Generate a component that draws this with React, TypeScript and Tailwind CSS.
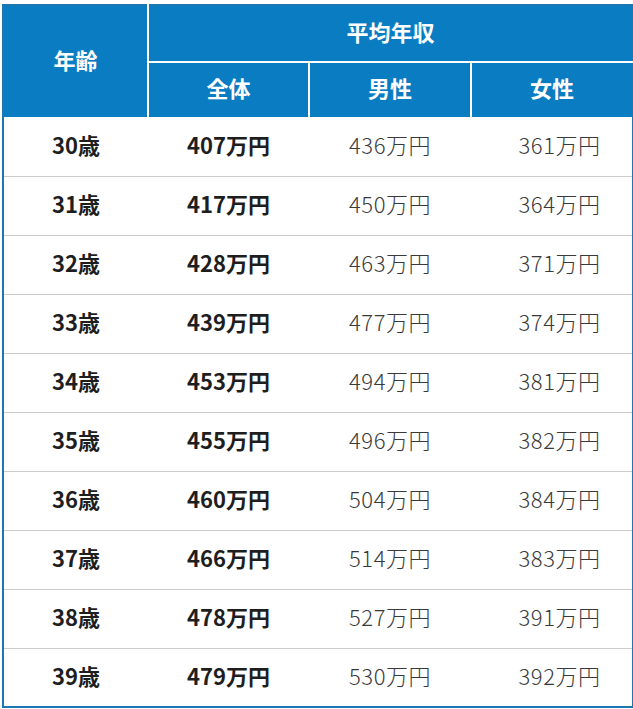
const rows = [
    ['30歳', '407万円', '436万円', '361万円'],
    ['31歳', '417万円', '450万円', '364万円'],
    ['32歳', '428万円', '463万円', '371万円'],
    ['33歳', '439万円', '477万円', '374万円'],
    ['34歳', '453万円', '494万円', '381万円'],
    ['35歳', '455万円', '496万円', '382万円'],
    ['36歳', '460万円', '504万円', '384万円'],
    ['37歳', '466万円', '514万円', '383万円'],
    ['38歳', '478万円', '527万円', '391万円'],
    ['39歳', '479万円', '530万円', '392万円'],
];

export default function App() {
    return (
        <div className="bg-white w-[633px] h-[709px] pt-[4px] pl-[2px]" style={{ fontFamily: '"Noto Sans CJK JP", "Noto Sans", sans-serif' }}>
            <table className="w-[630px] border-collapse table-fixed border-2 border-[#1d78b2] text-[22px] leading-none">
                <colgroup>
                    <col className="w-[145px]" />
                    <col className="w-[161px]" />
                    <col className="w-[162px]" />
                    <col className="w-[162px]" />
                </colgroup>
                <thead>
                    <tr className="h-[57px] bg-[#0a7dc2] text-white">
                        <th rowSpan={2} className="border-r-2 border-white font-bold pb-[6px]">年齢</th>
                        <th colSpan={3} className="border-b-2 border-white font-bold pb-[6px]">平均年収</th>
                    </tr>
                    <tr className="h-[55px] bg-[#0a7dc2] text-white">
                        <th className="border-r-2 border-white font-bold pb-[6px]">全体</th>
                        <th className="border-r-2 border-white font-bold pb-[6px]">男性</th>
                        <th className="font-bold pb-[6px]">女性</th>
                    </tr>
                </thead>
                <tbody>
                    {rows.map((r, i) => (
                        <tr key={r[0]} className={`h-[59px] text-center ${i > 0 ? 'border-t border-[#cccccc]' : ''}`}>
                            <td className="font-bold text-[#1e1e1e] pb-[5px]">{r[0]}</td>
                            <td className="font-bold text-[#1e1e1e] pb-[5px]">{r[1]}</td>
                            <td className="text-[#3a3a3a] font-light tracking-[0.5px] pb-[5px]">{r[2]}</td>
                            <td className="text-[#3a3a3a] font-light tracking-[0.5px] pb-[5px] pl-[16px]">{r[3]}</td>
                        </tr>
                    ))}
                </tbody>
            </table>
        </div>
    );
}
